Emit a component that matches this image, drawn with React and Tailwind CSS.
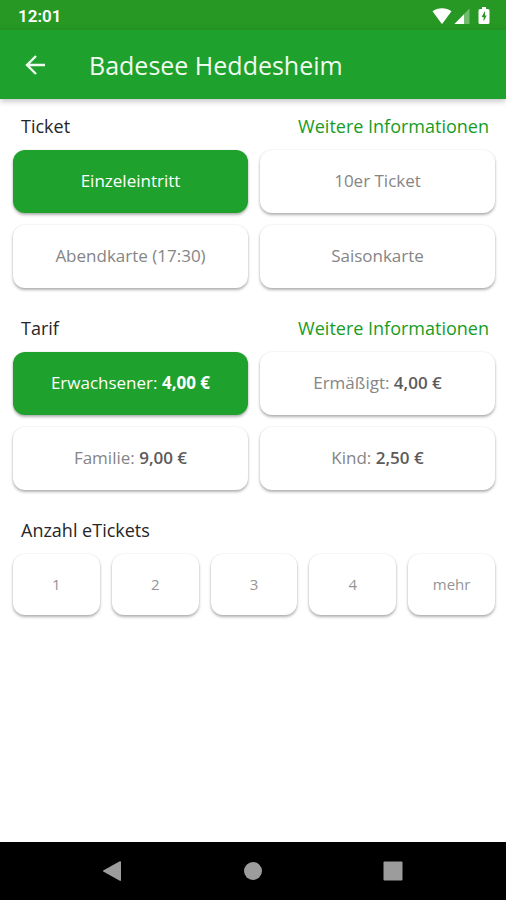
import { useState } from "react";

const tickets = [
  { label: "Einzeleintritt" },
  { label: "10er Ticket" },
  { label: "Abendkarte (17:30)" },
  { label: "Saisonkarte" },
];

const tariffs = [
  { label: "Erwachsener:", price: "4,00 €" },
  { label: "Ermäßigt:", price: "4,00 €" },
  { label: "Familie:", price: "9,00 €" },
  { label: "Kind:", price: "2,50 €" },
];

const amounts = ["1", "2", "3", "4", "mehr"];

function StatusBar() {
  return (
    <div className="flex h-[30px] items-center justify-between bg-[#269823] pl-[18px] pr-4 text-white">
      <span className="pt-0.5 font-[Roboto,sans-serif] text-[17px] leading-6 font-semibold">12:01</span>
      <div className="flex items-center pt-0.5">
        <svg className="h-4 w-5" viewBox="0 0 20 16" fill="currentColor" aria-hidden="true">
          <path d="M0.500 3.200C5.500-.8 14.500-.8 19.500 3.200L10.500 15.400Q10 16 9.500 15.400Z" />
        </svg>
        <svg className="ml-0.5 h-4 w-4" viewBox="0 0 16 16" fill="currentColor" aria-hidden="true">
          <path d="M15.500 0.500V16H0.500Z" opacity="0.35" />
          <path d="M10 6.200V16H0.500Z" />
        </svg>
        <svg className="ml-2 h-[18px] w-3" viewBox="0 0 12 18" aria-hidden="true">
          <path
            d="M4 0h4v2h2q1.500 0 1.500 1.500v12q0 1.500-1.500 1.500H2q-1.500 0-1.500-1.500v-12Q.5 2 2 2h2z"
            fill="currentColor"
          />
          <path d="M7 4L3.600 10h2v4.500L8.600 8.500H7z" fill="#269823" />
        </svg>
      </div>
    </div>
  );
}

function SectionHead({ title, info }) {
  return (
    <div className="flex h-6 items-center justify-between pl-2 pr-1.5 text-lg leading-6 font-medium">
      <h2 className="text-[#262626]">{title}</h2>
      {info && (
        <a href="#info" className="text-[#179c1f]">
          Weitere Informationen
        </a>
      )}
    </div>
  );
}

function Option({ item, active, onClick }) {
  return (
    <button
      type="button"
      aria-pressed={active}
      onClick={onClick}
      className={
        "h-[63px] rounded-xl pb-0.5 text-[17px] leading-6 shadow-[0_2px_3px_rgba(0,0,0,0.3),0_0_2px_rgba(0,0,0,0.1)] " +
        (active ? "bg-[#1fa12d] text-white" : "bg-white text-[#858585]")
      }
    >
      {item.label}
      {item.price && (
        <>
          {" "}
          <span className={active ? "font-bold" : "font-semibold text-[#5a5a5a]"}>{item.price}</span>
        </>
      )}
    </button>
  );
}

function OptionSection({ title, items }) {
  const [selected, setSelected] = useState(0);
  return (
    <section className="flex flex-col gap-3">
      <SectionHead title={title} info />
      <div className="grid grid-cols-2 gap-3">
        {items.map((item, i) => (
          <Option key={item.label} item={item} active={i === selected} onClick={() => setSelected(i)} />
        ))}
      </div>
    </section>
  );
}

export default function App() {
  return (
    <div className="flex min-h-screen flex-col bg-white font-['Open_Sans','Noto_Sans',sans-serif]">
      <StatusBar />
      <header className="flex h-[69px] items-center bg-[#1fa12d] pl-6 text-[#f0fbef] shadow-[0_2px_6px_rgba(0,0,0,0.25)]">
        <button type="button" aria-label="Zurück" className="flex w-6 justify-center">
          <svg className="h-6 w-6" viewBox="0 0 24 24" fill="none" stroke="currentColor" strokeWidth="2.400" aria-hidden="true">
            <path d="M21 12H3M12 3L3 12L12 21" />
          </svg>
        </button>
        <h1 className="ml-[41px] text-[25px] leading-8">Badesee Heddesheim</h1>
      </header>

      <main className="flex flex-1 flex-col gap-7 pt-[15px] pr-[11px] pb-6 pl-[13px]">
        <OptionSection title="Ticket" items={tickets} />
        <OptionSection title="Tarif" items={tariffs} />
        <section className="flex flex-col gap-3">
          <SectionHead title="Anzahl eTickets" />
          <div className="grid grid-cols-5 gap-3">
            {amounts.map((amount) => (
              <button
                key={amount}
                type="button"
                className="h-[61px] rounded-xl bg-white pb-0.5 text-[15px] leading-6 text-[#959595] shadow-[0_2px_3px_rgba(0,0,0,0.3),0_0_2px_rgba(0,0,0,0.1)]"
              >
                {amount}
              </button>
            ))}
          </div>
        </section>
      </main>

      <nav className="flex h-[58px] items-center justify-center gap-[120px] bg-black text-[#9c9c9c]">
        <button type="button" aria-label="Zurück">
          <svg className="h-5 w-5" viewBox="0 0 20 20" fill="currentColor" aria-hidden="true">
            <path d="M.2 10.400Q-.3 10 .2 9.600L16.800.2Q18 0 18 1V19Q18 20.300 16.800 19.800Z" />
          </svg>
        </button>
        <button type="button" aria-label="Startseite">
          <svg className="h-5 w-5" viewBox="0 0 20 20" fill="currentColor" aria-hidden="true">
            <circle cx="10" cy="10" r="9" />
          </svg>
        </button>
        <button type="button" aria-label="Übersicht">
          <svg className="h-5 w-5" viewBox="0 0 20 20" fill="currentColor" aria-hidden="true">
            <rect x="0.500" y="0.500" width="19" height="19" rx="1" />
          </svg>
        </button>
      </nav>
    </div>
  );
}
